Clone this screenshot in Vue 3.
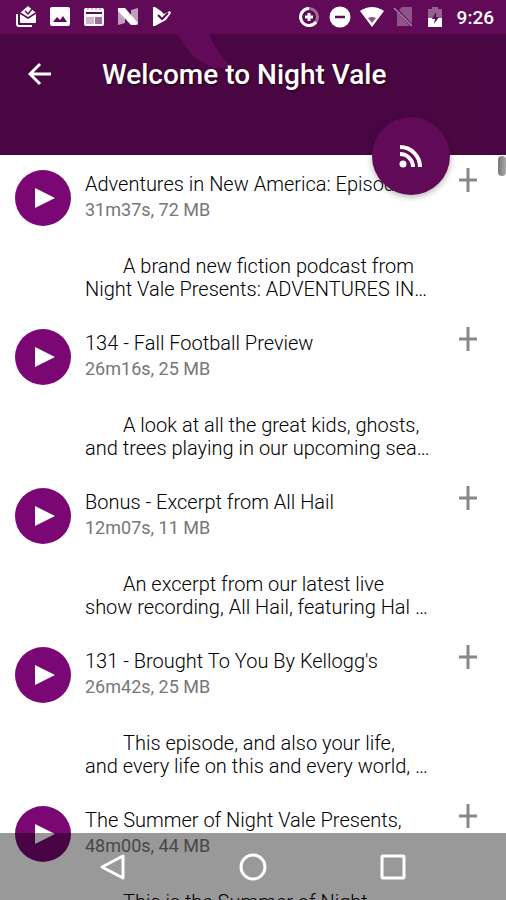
<script setup>
const episodes = [
  { title: 'Adventures in New America: Episode', meta: '31m37s, 72 MB', lines: ['A brand new fiction podcast from', 'Night Vale Presents: ADVENTURES IN…'] },
  { title: '134 - Fall Football Preview', meta: '26m16s, 25 MB', lines: ['A look at all the great kids, ghosts,', 'and trees playing in our upcoming sea…'] },
  { title: 'Bonus - Excerpt from All Hail', meta: '12m07s, 11 MB', lines: ['An excerpt from our latest live', 'show recording, All Hail, featuring Hal …'] },
  { title: "131 - Brought To You By Kellogg's", meta: '26m42s, 25 MB', lines: ['This episode, and also your life,', 'and every life on this and every world, …'] },
  { title: 'The Summer of Night Vale Presents,', meta: '48m00s, 44 MB', lines: ['This is the Summer of Night'] },
]
</script>

<template>
  <div class="screen">
    <header class="header">
      <svg class="art" viewBox="0 0 506 121" preserveAspectRatio="xMinYMin slice" aria-hidden="true">
        <path d="M178 0C186 18 200 29 214 34H232C222 24 214 12 209 0Z" fill="#600a58" />
        <path d="M432 0H484V121H432Z" fill="#4b0741" />
      </svg>
      <div class="status">
        <div class="icons notifications">
          <svg viewBox="0 0 22 22" aria-hidden="true">
            <path d="M2 8v10q0 2 2 2h13" fill="none" stroke="#fff" stroke-width="2" />
            <path d="M5 7l8-7 8 7v9q0 1-1 1H6q-1 0-1-1z" fill="#fff" />
            <path d="M5 7l8 5 8-5" fill="none" stroke="#600a58" stroke-width="1.500" />
            <path d="M10 5l3 3 4-5" fill="none" stroke="#600a58" stroke-width="1.500" />
          </svg>
          <svg viewBox="0 0 22 22" aria-hidden="true">
            <rect x="1" y="1" width="20" height="19" rx="2" fill="#fff" />
            <path d="M4 16l4-5 3 3 3-4 4 6z" fill="#600a58" />
          </svg>
          <svg viewBox="0 0 22 22" aria-hidden="true">
            <path d="M3 2h16a2 2 0 0 1 2 2v14a2 2 0 0 1-2 2H3a2 2 0 0 1-2-2V4a2 2 0 0 1 2-2z" fill="#fff" />
            <path d="M3 6h16v2H3z" fill="#600a58" />
            <path d="M3 11h8v7H3z" fill="#600a58" opacity=".3" />
            <path d="M12 11h7v7h-7z" fill="#600a58" opacity=".6" />
            <path d="M5 2v2M9 2v2M13 2v2M17 2v2" stroke="#600a58" opacity=".5" />
          </svg>
          <svg viewBox="0 0 22 22" aria-hidden="true">
            <path d="M1 2l7 1v14l-7 2zM14 4l7-2v17l-7-2z" fill="#fff" opacity=".6" />
            <path d="M1 2h7l13 15-2 2h-5L1 5z" fill="#fff" />
          </svg>
          <svg viewBox="0 0 22 22" aria-hidden="true">
            <path d="M2 1h2l6 4 3 3 6-3 1 2-5 7L4 20H2z" fill="#fff" />
            <path d="M7 9l4 4 6-6" fill="none" stroke="#600a58" stroke-width="2" />
          </svg>
        </div>
        <div class="icons system">
          <svg viewBox="0 0 22 22" aria-hidden="true">
            <circle cx="11" cy="11" r="8.500" fill="none" stroke="#fff" stroke-opacity=".4" stroke-width="3" />
            <path d="M11 2.500a8.500 8.500 0 1 0 7 13.500" fill="none" stroke="#fff" stroke-width="3" />
            <path d="M7 11h8M11 7v8" fill="none" stroke="#fff" stroke-width="3" />
          </svg>
          <svg viewBox="0 0 22 22" aria-hidden="true">
            <circle cx="11" cy="11" r="10.500" fill="#fff" />
            <path d="M6 11h10" stroke="#600a58" stroke-width="2.500" />
          </svg>
          <svg class="wide" viewBox="0 0 24 22" aria-hidden="true">
            <path d="M0 5Q12-3 24 5L12 21z" fill="#fff" />
            <path d="M8 12q4-2 8 0l-4 5z" fill="#600a58" opacity=".7" />
          </svg>
          <svg viewBox="0 0 22 22" aria-hidden="true">
            <path d="M9 1h10v19H4V6z" fill="#fff" opacity=".3" />
            <path d="M2 2l17 18" stroke="#600a58" stroke-width="3" />
            <path d="M1 2l18 18" stroke="#fff" stroke-opacity=".5" stroke-width="1.500" />
          </svg>
          <svg viewBox="0 0 22 22" aria-hidden="true">
            <path d="M8 1h6v2h4v9H4V3h4z" fill="#fff" opacity=".35" />
            <path d="M4 12h14v9H4z" fill="#fff" />
            <path d="M12 6l-4 7h3l-1 5 5-7h-3z" fill="#600a58" />
          </svg>
          <span class="clock">9:26</span>
        </div>
      </div>
      <div class="toolbar">
        <button class="plain back" aria-label="Back">
          <svg viewBox="0 0 24 24"><path d="M23 12H2M12 2L2 12l10 10" fill="none" stroke="#fff" stroke-width="3" /></svg>
        </button>
        <h1>Welcome to Night Vale</h1>
      </div>
      <button class="plain feed" aria-label="Feed">
        <svg viewBox="0 0 24 24" fill="none" stroke="#fff" stroke-width="4">
          <circle cx="4" cy="20" r="3.500" fill="#fff" stroke="none" />
          <path d="M1 10a13 13 0 0 1 13 13M1 3a20 20 0 0 1 20 20" />
        </svg>
      </button>
    </header>
    <main class="list">
      <article v-for="e in episodes" :key="e.title" class="episode">
        <button class="plain play" :aria-label="'Play ' + e.title">
          <svg viewBox="0 0 20 20"><path d="M0 0l20 10L0 20z" fill="#fff" /></svg>
        </button>
        <div class="info">
          <h2>{{ e.title }}</h2>
          <p class="meta">{{ e.meta }}</p>
          <p class="summary"><span v-for="line in e.lines" :key="line">{{ line }}</span></p>
        </div>
        <button class="plain add" :aria-label="'Add ' + e.title">
          <svg viewBox="0 0 24 24"><path d="M3 12h18M12 0v24" stroke="#888" stroke-width="3" /></svg>
        </button>
      </article>
      <div class="thumb"></div>
    </main>
    <nav class="nav">
      <button class="plain" aria-label="Back">
        <svg viewBox="0 0 28 28"><path d="M24 3v22L3 14z" /></svg>
      </button>
      <button class="plain" aria-label="Home">
        <svg viewBox="0 0 28 28"><circle cx="14" cy="14" r="12" /></svg>
      </button>
      <button class="plain" aria-label="Recent apps">
        <svg viewBox="0 0 28 28"><rect x="3" y="3" width="22" height="22" rx="1" /></svg>
      </button>
    </nav>
  </div>
</template>

<style>
body { margin: 0; background: #fff; }
</style>

<style scoped>
.screen {
  position: relative;
  display: flex;
  flex-direction: column;
  height: 100vh;
  overflow: hidden;
  font-family: Roboto, "Liberation Sans", sans-serif;
  color: #000;
}
.plain {
  display: flex;
  align-items: center;
  justify-content: center;
  padding: 0;
  border: 0;
  background: none;
  cursor: pointer;
}
.header {
  position: relative;
  z-index: 1;
  flex: none;
  height: 155px;
  background: #4a0642;
}
.art { position: absolute; top: 34px; left: 0; width: 100%; height: 121px; }
.status {
  display: flex;
  justify-content: space-between;
  height: 34px;
  padding: 0 12px 0 15px;
  background: #600a58;
}
.icons { display: flex; align-items: center; }
.icons svg { width: 22px; height: 22px; }
.notifications { gap: 12px; }
.system { gap: 9px; }
.icons .wide { width: 24px; }
.clock { margin-left: 2px; color: #fff; font-size: 19px; font-weight: 500; }
.toolbar {
  position: relative;
  display: flex;
  align-items: center;
  gap: 50px;
  height: 80px;
  padding-left: 28px;
}
.back svg { width: 24px; height: 24px; }
h1 { margin: 0; color: #fff; font-size: 28px; font-weight: 500; text-shadow: 1px 1px 2px #1a0017; }
.feed {
  position: absolute;
  right: 56px;
  bottom: -40px;
  width: 78px;
  height: 78px;
  border-radius: 50%;
  background: #600a58;
  box-shadow: 0 2px 6px rgba(0, 0, 0, .3);
}
.feed svg { width: 24px; height: 24px; }
.list { position: relative; flex: 1; min-height: 0; overflow: hidden; }
.episode {
  display: flex;
  align-items: flex-start;
  height: 144px;
  padding: 15px 26px 0 15px;
}
.play { flex: none; width: 56px; height: 56px; border-radius: 50%; background: #7b0775; }
.play svg { width: 20px; height: 20px; margin-left: 4px; }
.info { flex: 1; min-width: 0; margin-left: 14px; font-size: 20px; font-weight: 300; }
h2 { margin: 0; font-size: 20px; font-weight: 300; line-height: 29px; white-space: nowrap; }
.meta { margin: 0; font-size: 18px; font-weight: 400; line-height: 22px; color: #777; }
.summary { margin: 34px 0 0; line-height: 23px; white-space: nowrap; }
.summary span { display: block; }
.summary span:first-child { padding-left: 38px; }
.add { flex: none; width: 24px; height: 24px; margin-top: -2px; }
.add svg { width: 24px; height: 24px; }
.thumb {
  position: absolute;
  top: 1px;
  right: 0;
  width: 8px;
  height: 20px;
  border-radius: 4px;
  background: linear-gradient(90deg, #777, #aaa);
}
.nav {
  position: absolute;
  right: 0;
  bottom: 0;
  left: 0;
  z-index: 2;
  display: flex;
  align-items: center;
  justify-content: center;
  gap: 112px;
  height: 67px;
  background: rgba(0, 0, 0, .4);
}
.nav svg { width: 28px; height: 28px; fill: none; stroke: #fff; stroke-width: 3; stroke-linejoin: round; }
</style>
